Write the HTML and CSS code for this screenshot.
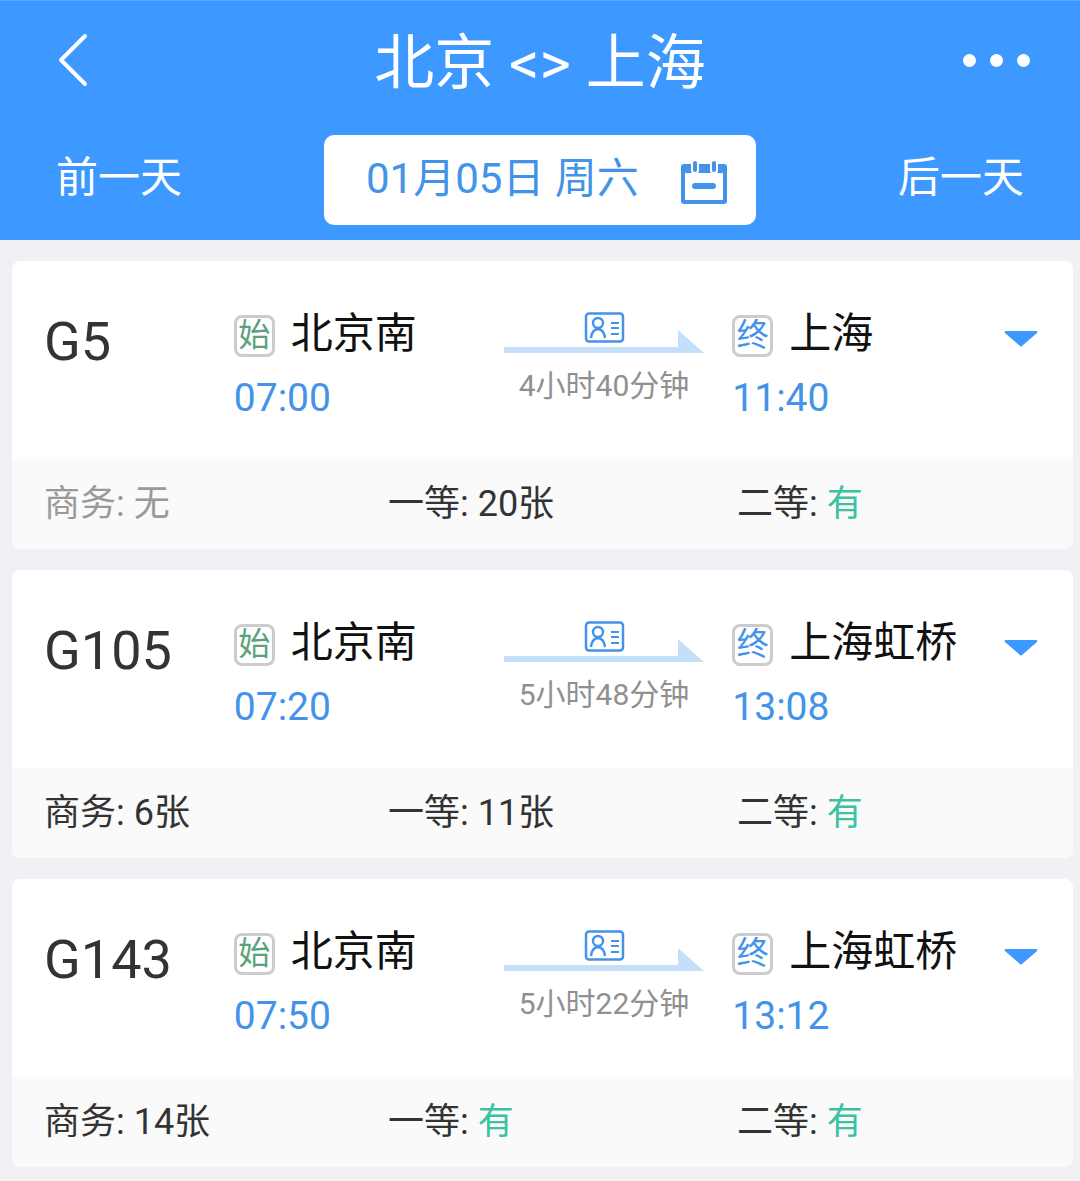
FILE: index.html

```html
<!DOCTYPE html>
<html lang="zh-CN">
<head>
  <meta charset="UTF-8" />
  <title>北京 &lt;&gt; 上海</title>
  <meta name="viewport" content="width=device-width, initial-scale=1" />
  <link rel="stylesheet" href="styles.css">
</head>
<body>
  <header class="header">
    <div class="title-row">
      <svg class="back" width="32" height="54" viewBox="0 0 32 54">
        <path d="M28 3 L4 27 L28 51" fill="none" stroke="#fff" stroke-width="4" stroke-linecap="round" stroke-linejoin="round"/>
      </svg>
      <h1 class="title">北京 &lt;&gt; 上海</h1>
      <div class="more"><i></i><i></i><i></i></div>
    </div>
    <div class="date-row">
      <span class="day-link">前一天</span>
      <div class="date-box">
        <span class="date-text">01月05日 周六</span>
        <svg class="calendar" width="46" height="46" viewBox="0 0 46 46">
          <path d="M3 5 H43 Q46 5 46 8 V42 Q46 45 43 45 H3 Q0 45 0 42 V8 Q0 5 3 5 Z" fill="#4393e8"/>
          <rect x="4" y="14" width="38" height="27" fill="#fff"/>
          <rect x="11" y="1" width="6" height="13" rx="3" fill="#4393e8" stroke="#fff" stroke-width="2"/>
          <rect x="30" y="1" width="6" height="13" rx="3" fill="#4393e8" stroke="#fff" stroke-width="2"/>
          <rect x="11" y="24" width="24" height="6" rx="3" fill="#4393e8"/>
        </svg>
      </div>
      <span class="day-link day-next">后一天</span>
    </div>
  </header>

  <main class="list">
    <section class="card">
      <div class="card-main">
        <div class="train-no">G5</div>
        <div class="stop stop-from">
          <div class="stop-name"><span class="badge badge-start">始</span>北京南</div>
          <div class="time">07:00</div>
        </div>
        <div class="route">
          <svg class="route-arrow" width="200" height="42" viewBox="0 0 200 42">
            <path d="M0 35 H174 V18 L200 41 H0 Z" fill="#c5dffb"/>
            <rect x="82" y="1.5" width="37" height="28" rx="3" fill="#fff" stroke="#4393e8" stroke-width="2.5"/>
            <circle cx="94" cy="11" r="5" fill="none" stroke="#4393e8" stroke-width="2.4"/>
            <path d="M87 26 Q88 17.5 94 17 Q100 17.5 101 26" fill="none" stroke="#4393e8" stroke-width="2.4"/>
            <path d="M107 11 H115 M107 16 H115 M107 22 H115" stroke="#4393e8" stroke-width="2.2"/>
          </svg>
          <div class="duration">4小时40分钟</div>
        </div>
        <div class="stop stop-to">
          <div class="stop-name"><span class="badge badge-end">终</span>上海</div>
          <div class="time">11:40</div>
        </div>
        <svg class="expand" width="34" height="18" viewBox="0 0 34 18">
          <path d="M2 1 H32 Q34 1 33 3 L18 16 Q17 17 16 16 L1 3 Q0 1 2 1 Z" fill="#3d98ff"/>
        </svg>
      </div>
      <div class="card-seats">
        <span class="seat seat-none">商务: 无</span>
        <span class="seat">一等: 20张</span>
        <span class="seat">二等: <em>有</em></span>
      </div>
    </section>

    <section class="card">
      <div class="card-main">
        <div class="train-no">G105</div>
        <div class="stop stop-from">
          <div class="stop-name"><span class="badge badge-start">始</span>北京南</div>
          <div class="time">07:20</div>
        </div>
        <div class="route">
          <svg class="route-arrow" width="200" height="42" viewBox="0 0 200 42">
            <path d="M0 35 H174 V18 L200 41 H0 Z" fill="#c5dffb"/>
            <rect x="82" y="1.5" width="37" height="28" rx="3" fill="#fff" stroke="#4393e8" stroke-width="2.5"/>
            <circle cx="94" cy="11" r="5" fill="none" stroke="#4393e8" stroke-width="2.4"/>
            <path d="M87 26 Q88 17.5 94 17 Q100 17.5 101 26" fill="none" stroke="#4393e8" stroke-width="2.4"/>
            <path d="M107 11 H115 M107 16 H115 M107 22 H115" stroke="#4393e8" stroke-width="2.2"/>
          </svg>
          <div class="duration">5小时48分钟</div>
        </div>
        <div class="stop stop-to">
          <div class="stop-name"><span class="badge badge-end">终</span>上海虹桥</div>
          <div class="time">13:08</div>
        </div>
        <svg class="expand" width="34" height="18" viewBox="0 0 34 18">
          <path d="M2 1 H32 Q34 1 33 3 L18 16 Q17 17 16 16 L1 3 Q0 1 2 1 Z" fill="#3d98ff"/>
        </svg>
      </div>
      <div class="card-seats">
        <span class="seat">商务: 6张</span>
        <span class="seat">一等: 11张</span>
        <span class="seat">二等: <em>有</em></span>
      </div>
    </section>

    <section class="card">
      <div class="card-main">
        <div class="train-no">G143</div>
        <div class="stop stop-from">
          <div class="stop-name"><span class="badge badge-start">始</span>北京南</div>
          <div class="time">07:50</div>
        </div>
        <div class="route">
          <svg class="route-arrow" width="200" height="42" viewBox="0 0 200 42">
            <path d="M0 35 H174 V18 L200 41 H0 Z" fill="#c5dffb"/>
            <rect x="82" y="1.5" width="37" height="28" rx="3" fill="#fff" stroke="#4393e8" stroke-width="2.5"/>
            <circle cx="94" cy="11" r="5" fill="none" stroke="#4393e8" stroke-width="2.4"/>
            <path d="M87 26 Q88 17.5 94 17 Q100 17.5 101 26" fill="none" stroke="#4393e8" stroke-width="2.4"/>
            <path d="M107 11 H115 M107 16 H115 M107 22 H115" stroke="#4393e8" stroke-width="2.2"/>
          </svg>
          <div class="duration">5小时22分钟</div>
        </div>
        <div class="stop stop-to">
          <div class="stop-name"><span class="badge badge-end">终</span>上海虹桥</div>
          <div class="time">13:12</div>
        </div>
        <svg class="expand" width="34" height="18" viewBox="0 0 34 18">
          <path d="M2 1 H32 Q34 1 33 3 L18 16 Q17 17 16 16 L1 3 Q0 1 2 1 Z" fill="#3d98ff"/>
        </svg>
      </div>
      <div class="card-seats">
        <span class="seat">商务: 14张</span>
        <span class="seat">一等: <em>有</em></span>
        <span class="seat">二等: <em>有</em></span>
      </div>
    </section>
  </main>
</body>
</html>
```

FILE: styles.css

```css
* { box-sizing: border-box; }
html, body { height: 100%; }
body { margin: 0; background: #f0f0f5; overflow: hidden; font-family: Roboto, "Noto Sans CJK SC", sans-serif; }

.header { height: 240px; background: #3d98ff; color: #fff; padding-top: 33px; box-shadow: inset 0 1px #5aa8ff; }
.title-row { display: grid; grid-template-columns: 1fr auto 1fr; align-items: center; height: 54px; padding: 0 50px; }
.back { margin-left: 7px; }
.title { margin: 0; height: 54px; font-size: 60px; font-weight: 400; line-height: 62px; }
.more { display: flex; justify-content: flex-end; gap: 14px; }
.more i { display: block; width: 13px; height: 13px; border-radius: 50%; background: #fff; }
.date-row { display: grid; grid-template-columns: 1fr 432px 1fr; align-items: center; margin-top: 48px; padding: 0 56px; }
.day-link { font-size: 42px; line-height: 86px; padding-bottom: 4px; }
.day-next { justify-self: end; }
.date-box { display: flex; align-items: center; justify-content: space-between; height: 90px; margin: 0 -56px; width: 432px; justify-self: center; padding: 0 29px 0 42px; background: #fff; border-radius: 10px; color: #4393e8; font-size: 42px; }
.date-text { margin-bottom: 12px; }
.calendar { margin-top: 4px; }

.list { display: flex; flex-direction: column; gap: 21px; padding: 21px 7px 0 12px; }
.card { border-radius: 8px; overflow: hidden; background: #fff; }
.card-main { display: flex; height: 198px; padding: 0 35px 0 33px; }
.train-no { width: 189px; padding-top: 50px; margin-left: -1px; margin-right: 1px; font-size: 54px; line-height: 62px; color: #333; }
.stop-from { width: 270px; }
.stop-to { width: 271px; }
.stop { padding-top: 43px; }
.stop-name { display: flex; align-items: center; height: 50px; font-size: 42px; color: #111; gap: 16px; }
.badge { display: flex; align-items: center; justify-content: center; width: 41px; height: 42px; margin-top: 14px; padding-bottom: 2px; border: 3px solid #ccc; border-radius: 8px; font-size: 32px; line-height: 1; }
.badge-start { color: #5aa27c; }
.badge-end { color: #4393e8; }
.time { margin-top: 21px; font-size: 39px; line-height: 46px; color: #4393e8; }
.route { width: 229px; padding-top: 51px; }
.route-arrow { display: block; }
.duration { width: 200px; margin-top: 14px; padding-left: 1px; text-align: center; font-size: 30px; line-height: 36px; color: #909090; }
.expand { margin: 69px 0 0 1px; }

.card-seats { display: grid; grid-template-columns: 344px 349px 1fr; align-items: center; height: 90px; padding: 0 0 8px 32px; background: #fafafa; }
.seat { font-size: 36px; color: #333; }
.seat-none { color: #999; }
.seat em { font-style: normal; color: #3cc2a0; }
```
